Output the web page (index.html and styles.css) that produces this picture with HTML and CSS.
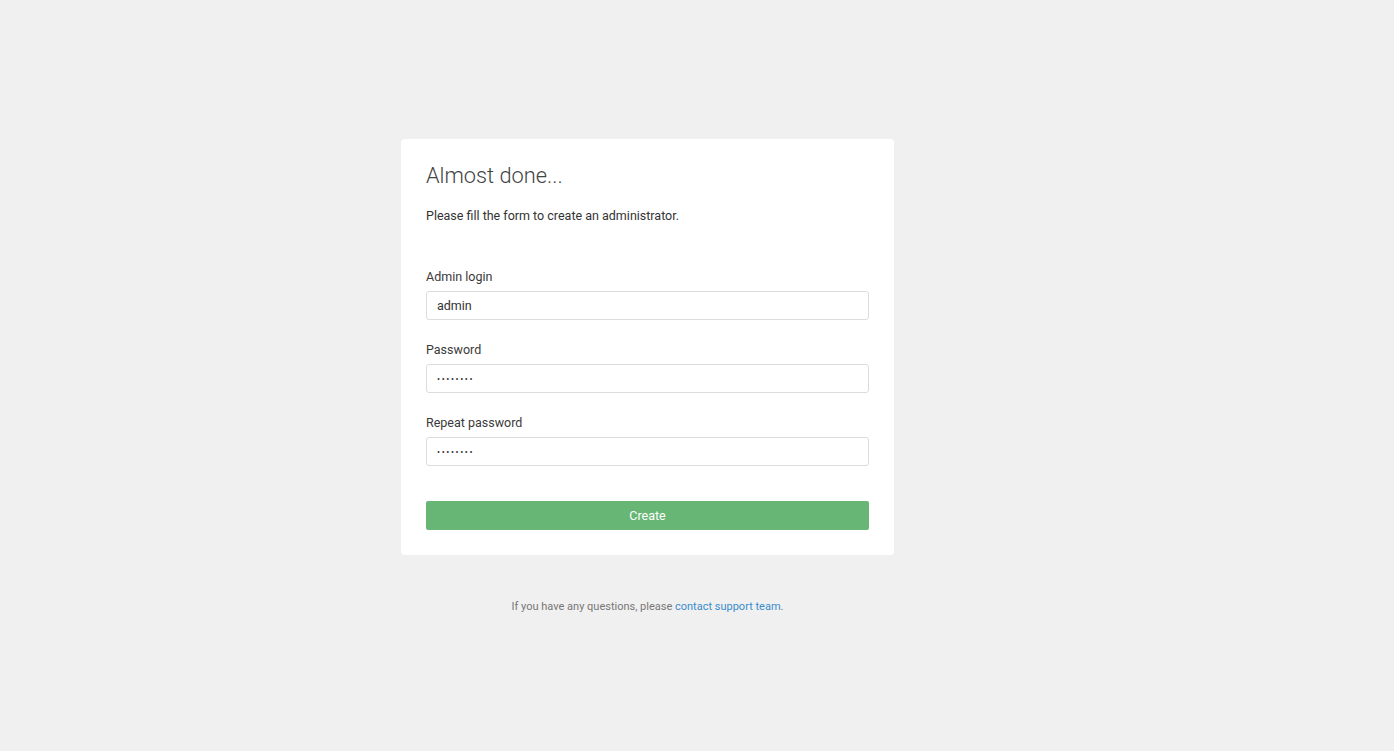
FILE: index.html
```html
<!DOCTYPE html>
<html>
  <head>
    <meta charset="utf-8">
    <title>Almost done</title>
    <link rel="stylesheet" href="styles.css">
  </head>
  <body>
    <div class="page">
      <form class="card">
        <h1>Almost done...</h1>
        <p class="lead">Please fill the form to create an administrator.</p>

        <div class="field">
          <label for="login">Admin login</label>
          <input id="login" type="text" value="admin">
        </div>
        <div class="field">
          <label for="pass">Password</label>
          <input id="pass" type="password" value="password">
        </div>
        <div class="field">
          <label for="pass2">Repeat password</label>
          <input id="pass2" type="password" value="password">
        </div>

        <button type="button">Create</button>
      </form>

      <p class="footer">If you have any questions, please <a href="#">contact support team</a>.</p>
    </div>
  </body>
</html>
```

FILE: styles.css
```css
/* General */

* {
  box-sizing: border-box;
}

html {
  height: 100%;
}

body {
  margin: 0;
  height: 100%;
  background-color: #f0f0f0;
  font-family: Roboto, "Liberation Sans", sans-serif;
  color: #333;
}

.page {
  width: 493px;
  margin: 0 0 0 401px;
  padding-top: 139px;
}

/* Card */

.card {
  background-color: #fff;
  border-radius: 4px;
  padding: 25px 25px 25px;
  display: flex;
  flex-direction: column;
}

.card h1 {
  margin: 0;
  font-size: 21.8px;
  line-height: 24px;
  font-weight: 300;
  color: #444;
}

.lead {
  margin: 19px 0 0;
  font-size: 12.5px;
  line-height: 18px;
}

.field {
  display: flex;
  flex-direction: column;
  gap: 5px;
  margin-top: 21px;
}

.lead + .field {
  margin-top: 43px;
}

.field label {
  font-size: 12.5px;
  line-height: 18px;
  color: #3a3a3a;
}

.field input {
  height: 29px;
  border: 1px solid #dcdcdc;
  border-radius: 3px;
  padding: 0 10px;
  font-family: inherit;
  font-size: 12.5px;
  color: #333;
  outline: none;
}

.field input[type="password"] {
  font-size: 9px;
  letter-spacing: 1.6px;
}

button {
  margin-top: 35px;
  height: 29px;
  border: 0;
  border-radius: 2px;
  background-color: #67b675;
  color: #fff;
  font-family: inherit;
  font-size: 12.5px;
  cursor: pointer;
}

/* Footer */

.footer {
  margin: 44px 0 0;
  text-align: center;
  font-size: 11px;
  line-height: 16px;
  color: #777;
}

.footer a {
  color: #3a8dcc;
  text-decoration: none;
}
```
